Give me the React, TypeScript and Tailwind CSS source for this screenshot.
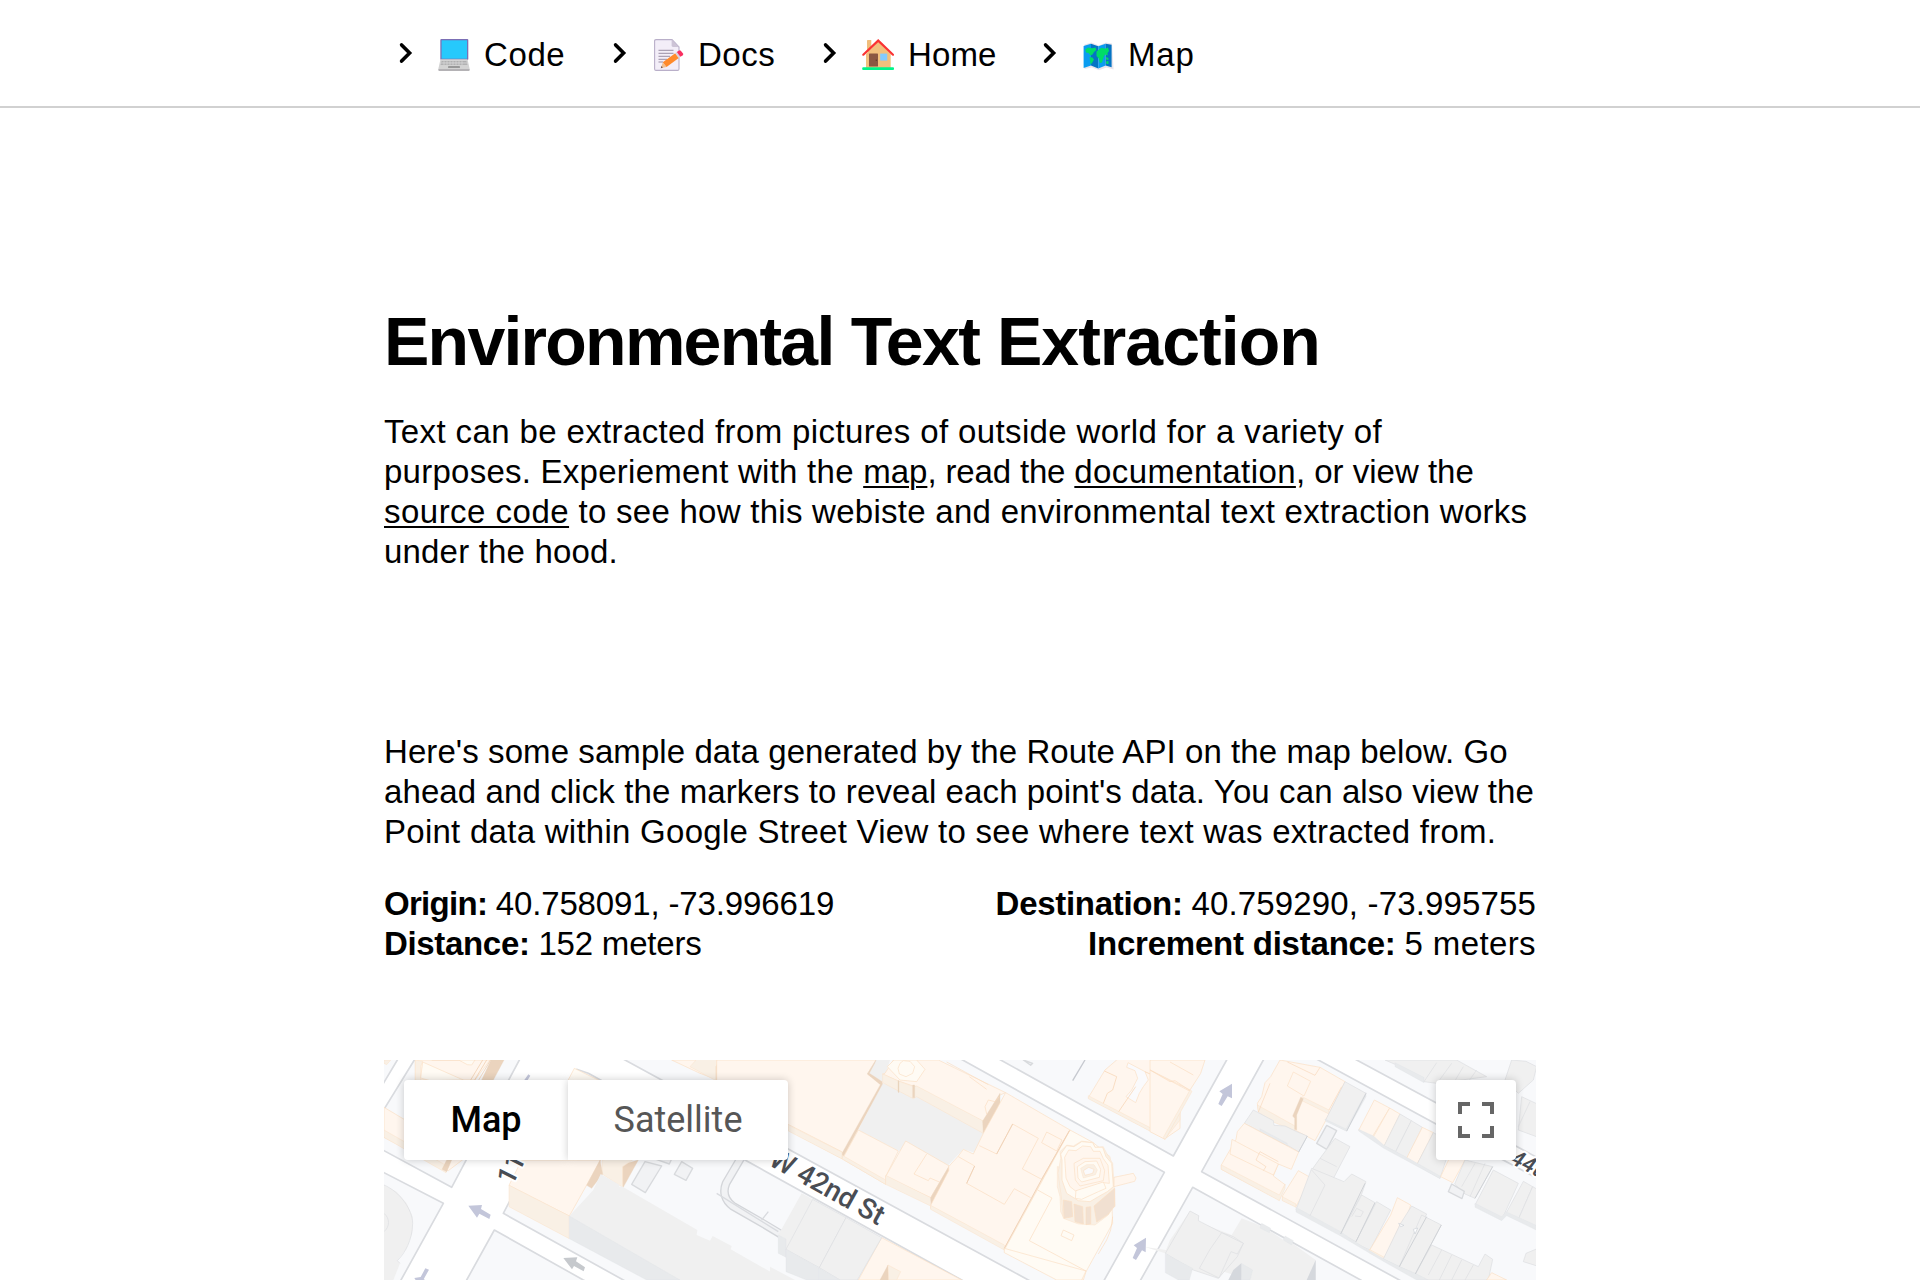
import type { ReactNode } from "react";

type Shape = [points: string, kind: keyof typeof KINDS];

const KINDS = {
  land: { fill: "#f8f9fb", stroke: "#d9dbdf", w: 5 },
  lot: { fill: "#f1f2f4", stroke: "#d8dadd", w: 4 },
  court: { fill: "#fafafc", stroke: "#fbdfc4", w: 2 },
  top: { fill: "#fff6ee", stroke: "#fbdfc4", w: 2 },
  pale: { fill: "#fffbf4", stroke: "#fbdfc4", w: 2 },
  side: { fill: "#f9f0e5", stroke: "#fbe3cb", w: 1.5 },
  dark: { fill: "#ebd4be", stroke: "#ebd4be", w: 1 },
  tan: { fill: "#f1e0d1", stroke: "#fbdfc4", w: 2 },
  gray: { fill: "#f0f0f0", stroke: "#dddee1", w: 2 },
  flat: { fill: "#f0f0f0", stroke: "none", w: 0 },
  wall: { fill: "#e8eaec", stroke: "#e2e4e7", w: 1 },
  shade: { fill: "#d5d8dd", stroke: "none", w: 0 },
};

function Shapes({ items }: { items: Shape[] }) {
  return (
    <>
      {items.map(([points, kind], i) => (
        <polygon key={i} points={points} fill={KINDS[kind].fill} stroke={KINDS[kind].stroke} strokeWidth={KINDS[kind].w} strokeLinejoin="round" />
      ))}
    </>
  );
}

const blocks: Shape[] = [
  ["-20,-20 80,-20 52,30 12,97 -20,150", "land"],
  ["133,-20 103,30 12,178 -20,230 -20,284 12,302 215,412 418,30 446,-20", "land"],
  ["-20,350 12,368 190,460 63,690 40,730 -20,730", "land"],
  ["343,540 260,690 240,730 690,730 610,690", "land"],
  ["590,58 625,70 1745,690 1820,730 800,730 730,690 370,490 400,432", "land"],
  ["640,-20 735,30 1945,690 2020,730 2150,730 2173,690 2353,367 1748,30 1650,-20", "land"],
  ["1770,-20 1862,30 2380,318 2540,30 2568,-20", "land"],
  ["2680,-20 2650,30 2465,365 3058,690 3130,730 3500,730 3500,400 3168,222 2815,30 2720,-20", "land"],
  ["2438,412 2282,690 2260,730 3010,730 2942,690", "land"],
  ["2840,-20 2930,30 3168,158 3500,338 3500,-20", "land"],
];

const west: Shape[] = [
  ["12,30 32,30 20,44 12,40", "side"],
  ["106,30 330,30 285,90 106,90", "top"],
  ["106,30 106,90 122,95 122,50 128,34", "side"],
  ["155,30 285,30 275,45 262,44 236,30", "pale"],
  ["128,36 250,90 150,92 122,84", "pale"],
  ["333,30 372,30 340,90 305,90", "dark"],
  ["12,172 260,320 205,362 12,262", "top"],
  ["12,240 205,350 198,368 12,262", "side"],
  ["215,330 200,365 186,358 200,330", "dark"],
  ["12,405 50,425 80,460 98,500 97,550 80,595 52,632 60,640 40,690 12,690", "flat"],
  ["583,55 562,95 560,120 700,120 655,90", "pale"],
  ["875,30 1008,88 1022,130 1300,200 1420,30", "flat"],
  ["875,30 1008,30 1008,88 960,70", "top"],
  ["950,28 1024,28 1008,50 1008,92 930,50", "side"],
  ["1008,50 1020,28 1045,28 1008,92", "dark"],
  ["755,403 795,335 845,348 796,428", "lot"],
  ["905,335 938,355 918,391 883,373", "lot"],
  ["820,325 868,342 878,320", "lot"],
  ["425,330 662,330 568,498 387,406", "top"],
  ["387,406 568,498 568,566 387,470", "side"],
  ["775,330 728,415 722,345", "dark"],
  ["666,330 775,318 728,350 728,412 666,372", "side"],
  ["660,330 668,372 635,415 620,406", "dark"],
  ["662,372 718,404 718,412 724,408 952,540 950,555 990,572 998,558 1055,588 1052,598 1215,690 840,690 568,498 640,420", "flat"],
  ["568,498 900,690 800,690 568,566", "wall"],
];

const central: Shape[] = [
  ["-160,30 318,30 292,72 337,100 217,325 215,305 -20,185 -160,100", "top"],
  ["-20,195 217,307 217,327 -20,200", "side"],
  ["55,225 217,307 217,327 55,243", "side"],
  ["318,30 360,30 340,95 292,72", "flat"],
  ["337,100 440,130 655,240 620,310 580,298 530,350 380,300 265,240", "flat"],
  ["292,72 318,30 314,40 298,70 337,95 337,103 217,325 217,308 331,104", "dark"],
  ["265,240 385,303 347,380 347,403 217,327", "top"],
  ["217,316 347,390 347,403 217,327", "side"],
  ["345,70 370,30 505,30 707,128 690,135 640,215 440,112 430,108 385,93 338,72", "top"],
  ["338,72 385,93 430,110 440,108 640,213 640,250 440,140 430,146 338,98", "side"],
  ["690,130 690,165 640,250 638,213", "dark"],
  ["352,50 372,30 440,30 465,58 440,95 390,90", "pale"],
  ["384,55 390,40 400,32 420,34 434,50 428,70 408,80 388,72", "pale"],
  ["384,92 387,92 387,128 384,126", "dark"],
  ["428,105 434,105 434,143 428,143", "dark"],
  ["407,273 538,348 482,443 347,380", "top"],
  ["347,376 482,443 482,468 347,403", "side"],
  ["536,350 538,362 484,466 482,443", "dark"],
  ["707,128 900,240 703,595 482,475 482,466 536,362 536,350 565,318 580,298 610,312 640,250", "top"],
  ["482,466 703,585 703,600 482,478", "side"],
  ["900,240 970,278 1020,320 1028,520 948,665 940,690 880,690 703,600", "pale"],
  ["703,595 948,663 935,690 860,690 703,608", "pale"],
  ["335,563 575,690 265,690", "top"],
  ["354,645 356,690 330,690", "dark"],
  ["354,645 392,665 380,690 356,690", "side"],
  ["95,430 128,448 48,598 48,620 25,610 25,555", "flat"],
  ["25,555 48,567 48,622 25,610", "wall"],
  ["128,448 228,503 148,653 48,598", "gray"],
  ["228,503 335,563 262,690 210,690 148,653", "gray"],
  ["48,598 148,655 148,690 110,690 48,665", "wall"],
  ["148,655 210,690 148,690", "wall"],
  ["0,650 75,690 0,690", "flat"],
  ["1040,30 1110,-5 1230,40 1230,235 1185,266 955,143 1005,60", "top"],
  ["955,137 1185,256 1230,185 1230,210 1185,267 955,146", "side"],
  ["1074,38 1125,65 1135,90 1120,110 1108,130 1097,158 1068,140 1085,120 1103,85 1095,62 1070,52", "court"],
  ["760,30 788,40 782,46", "lot"],
];

const tower: Shape[] = [
  ["862,350 876,352 872,385 878,420 880,502 872,485 870,440 862,410", "side"],
  ["870,305 890,285 910,288 935,273 970,278 975,292 1000,290 1010,310 1028,340 1032,400 1035,470 1020,475 1015,495 975,525 925,522 880,505 874,440 864,370 872,325", "side"],
  ["872,312 890,287 912,290 935,275 968,278 975,292 998,292 1008,320 1025,340 1030,410 1012,425 985,440 960,455 925,452 890,430 876,390 876,330", "pale"],
  ["884,322 896,300 918,302 938,288 962,290 970,304 990,304 1000,326 1014,346 1018,400 1000,398 918,424 900,410 888,384", "top"],
  ["1032,382 1090,370 1098,384 1094,394 1032,410", "top"],
  ["912,340 940,325 990,325 1004,362 1000,392 930,408 916,390", "top"],
  ["922,350 945,335 980,333 992,358 988,382 935,396 924,384", "pale"],
  ["932,355 950,344 972,344 982,360 976,374 940,384", "side"],
  ["940,362 956,352 972,358 968,370 945,376", "court"],
  ["918,422 1000,396 1008,415 985,425 935,448 916,445", "pale"],
  ["880,450 905,455 908,500 882,505", "tan"],
  ["912,462 938,470 940,522 915,515", "tan"],
  ["948,472 962,470 962,522 948,524", "tan"],
  ["972,468 1034,415 1034,468 1016,492 980,516", "tan"],
];

const east: Shape[] = [
  ["390,30 510,52 585,95 527,212 495,272 435,240 360,208 325,182 322,160 335,140 345,98 362,80", "top"],
  ["322,165 435,228 435,243 360,212 325,186", "side"],
  ["456,140 537,180 537,192 452,150", "side"],
  ["452,142 460,146 440,195 440,240 434,238 434,205 428,198", "dark"],
  ["585,95 648,130 590,243 527,210", "gray"],
  ["525,207 588,237 648,128 648,140 590,244 527,214", "wall"],
  ["430,66 482,94 462,138 412,108", "top"],
  ["310,180 370,212 372,226 405,228 440,245 472,258 446,306 420,290 330,245 283,220", "gray"],
  ["330,236 412,280 412,288 330,246", "wall"],
  ["283,220 446,306 424,358 385,342 370,378 405,404 388,450 214,358 214,345 258,268 262,245", "top"],
  ["214,345 388,435 405,402 405,415 388,452 214,358", "side"],
  ["246,268 385,342 370,375 240,312", "top"],
  ["530,226 560,242 530,298 500,280", "lot"],
  ["673,150 719,174 666,262 626,241", "top"],
  ["719,174 750,192 702,290 666,268", "top"],
  ["750,192 784,212 737,305 702,288", "gray"],
  ["784,212 817,232 770,328 737,305", "gray"],
  ["817,232 850,248 800,345 768,328", "top"],
  ["850,248 905,278 870,385 800,345", "gray"],
  ["626,238 670,258 702,286 770,322 870,378 870,386 700,294 626,243", "wall"],
  ["905,310 945,330 908,398 872,380", "top"],
  ["945,330 1028,350 975,445 945,432 914,402", "gray"],
  ["905,402 943,424 936,446 895,425", "lot"],
  ["1030,360 1105,400 1055,510 975,465", "gray"],
  ["1120,394 1148,410 1105,508 1068,490", "gray"],
  ["1148,410 1200,440 1200,550 1105,508", "gray"],
  ["975,460 1055,500 1068,485 1200,545 1200,560 1070,497 1055,512 975,472", "wall"],
  ["555,265 600,290 545,395 485,360 510,325", "gray"],
  ["445,362 484,384 438,470 397,450 398,437", "top"],
  ["397,440 438,462 438,472 397,452", "side"],
  ["485,355 582,395 605,372 648,395 635,432 572,552 438,480", "gray"],
  ["635,435 675,458 618,575 572,552", "gray"],
  ["680,455 722,480 660,600 615,580", "gray"],
  ["742,443 782,465 768,510 752,520 703,627 658,602 722,495", "top"],
  ["658,598 703,622 768,510 768,518 703,632 658,608", "side"],
  ["785,468 830,492 748,650 700,627 752,520", "gray"],
  ["815,495 874,525 796,672 748,650", "gray"],
  ["845,585 985,650 1005,612 1028,628 1015,690 820,690 796,672", "gray"],
  ["438,472 572,545 615,575 660,603 700,626 748,650 796,670 835,690 800,690 700,634 572,558 438,486", "wall"],
  ["1025,668 1070,690 1010,690", "top"],
  ["1128,610 1200,580 1200,660 1120,635", "gray"],
  ["-18,590 48,600 60,570 120,483 148,497 145,515 245,555 275,505 340,530 400,570 430,582 497,630 497,690 420,690 300,690 46,610", "flat"],
  ["46,610 120,483 146,497 145,512 215,548 250,560 280,580 262,620 205,685 130,660", "gray"],
  ["46,612 128,655 118,690 85,690 46,668", "wall"],
  ["215,548 280,580 262,612 243,605 207,684 148,655 180,598", "gray"],
  ["274,640 308,660 300,690 274,690", "wall"],
  ["274,640 274,690 235,690 250,660", "shade"],
  ["497,630 497,690 470,690", "shade"],
  ["335,520 362,535 358,548 330,534", "wall"],
  ["405,558 430,572 425,585 400,570", "wall"],
  ["705,30 740,45 822,95 860,100 1010,80 920,30", "gray"],
  ["735,38 822,82 822,98 735,50", "wall"],
  ["1085,30 1128,34 1160,50 1150,90 1105,130 1065,90", "gray"],
  ["1115,140 1200,180 1200,275 1105,240", "gray"],
  ["0,30 165,30 152,70 120,120 0,60", "top"],
  ["0,60 120,124 45,268 0,245", "top"],
  ["120,120 126,124 46,268 40,262", "side"],
];

function Lines({ d, color = "#dddee1", w = 2 }: { d: string; color?: string; w?: number }) {
  return <path d={d} fill="none" stroke={color} strokeWidth={w} strokeLinejoin="round" />;
}

function StreetMap() {
  return (
    <svg viewBox="12 30 3456 660" className="block h-[220px] w-[1152px]" preserveAspectRatio="none">
      <rect x="0" y="0" width="3500" height="720" fill="#ffffff" />
      <Shapes items={blocks} />
      <Shapes items={west} />
      <Lines d="M272,90 L308,30 M284,90 L320,30 M296,90 L332,30" color="#efc9a6" />
      <Lines d="M12,490 C30,505 30,530 12,545" />
      <Lines d="M12,405 C60,425 98,480 98,520 C97,570 75,610 52,632 L60,640" />
      <path d="M1082,325 L1038,400 C1028,425 1034,450 1058,468 L1140,515 L1215,560" fill="none" stroke="#d3d5d9" strokeWidth="26" />
      <path d="M1082,325 L1038,400 C1028,425 1034,450 1058,468 L1140,515 L1215,560" fill="none" stroke="#f1f2f4" strokeWidth="18" />
      <g transform="translate(1170 0)">
        <Shapes items={central} />
        <Lines d="M945,30 L908,92" color="#c6c9cf" w={4} />
        <Lines d="M628,287 L680,312 L728,222 L805,265 L757,357 L815,388 M815,388 L900,240 M830,246 L876,270 L860,303 L815,278 Z M565,320 L614,348 L590,400 L703,463 L733,416 L782,443 M470,312 L432,372 L475,392 L480,384 L508,396 M530,36 L655,104 M598,80 L650,118 M688,140 L675,155 L655,150 L645,170 L650,192" color="#fbdcbf" />
        <Lines d="M680,312 L728,222 M815,388 L898,242 M703,595 L815,388 M590,400 L614,348" color="#f0d3b9" w={3} />
        <Lines d="M803,420 L846,444 L778,572 L948,663 M880,540 L912,555 L905,572 L873,557 Z M1028,500 L1022,540 L1010,570 L985,612" color="#fbdcbf" />
        <Lines d="M1003,63 L1040,80 L1028,120 L1012,130 L1000,160 M1125,65 L1200,100 M1046,185 L1097,110" color="#f8d8bb" w={2.5} />
        <Lines d="M-5,485 L-25,510 M-160,430 L25,545" color="#d9dbdf" w={4} />
        <Shapes items={tower} />
      </g>
      <g transform="translate(2310 0)">
        <Shapes items={east} />
        <Lines d="M0,60 L60,95 L75,92 L120,122 M60,36 L130,75" color="#fbdcbf" />
        <Lines d="M510,52 L495,76 L412,36 M537,180 L575,110 M325,186 L360,100 M318,330 L330,305 L385,335 M318,330 L348,350 L340,362" color="#f8d8bb" />
        <Lines d="M510,325 L560,350 M485,360 L525,405 L480,497 M605,500 L620,475 L640,485 L632,500 L615,498 M875,600 L835,675 M905,615 L868,690 M935,630 L905,690 M970,645 L945,690 M860,38 L822,95 M905,40 L865,95 M940,50 L915,92 M980,60 L955,95 M1005,340 L960,440 M975,340 L935,410 M1140,155 L1105,230" />
        <Lines d="M748,650 L830,500 M796,672 L874,525 M590,243 L648,130 M446,306 L472,258 M975,445 L1028,350 M572,552 L645,400 M618,575 L675,458" color="#d0d3d7" w={3} />
        <path d="M790,538 L803,534 L795,552 Z M746,520 L762,526 L752,530 Z" fill="#fff" stroke="#ccd0d6" strokeWidth="2" />
      </g>

      <g fill="#c3c6da">
        <path d="M265,467 L306,465 L303,477 L332,494 L328,507 L298,491 L291,503 Z" />
        <path d="M103,684 L122,681 L136,655 L147,659 L131,688 L140,692 L108,692 Z" />
        <path d="M445,73 L433,90 L443,90 L451,77 Z" />
        <path d="M2298,563 L2261,586 L2271,594 L2258,624 L2268,630 L2286,601 L2297,607 Z" />
        <path d="M2556,101 L2518,124 L2528,132 L2515,162 L2525,168 L2543,139 L2556,145 Z" />
      </g>
      <path d="M550,624 L592,622 L588,634 L615,652 L611,664 L582,648 L576,658 Z" fill="#c6c9cd" />

      <g fontFamily="Roboto" fontWeight="500" fill="#494d54" stroke="#ffffff" strokeWidth="12" strokeLinejoin="round" paintOrder="stroke">
        <text transform="translate(1162 343) rotate(29)" fontSize="84" textLength="380">W 42nd St</text>
        <text transform="translate(397 409) rotate(-63)" fontSize="80">11th</text>
        <text transform="translate(3388 338) rotate(27)" fontSize="66" fontStyle="italic">44th</text>
      </g>
    </svg>
  );
}

function Chevron() {
  return (
    <svg viewBox="0 0 14 22" className="h-[22px] w-[14px] shrink-0" fill="none" stroke="#000" strokeWidth="3.6" strokeLinecap="round" strokeLinejoin="miter">
      <path d="M2.6 2.9 L10.6 11 L2.6 19.1" />
    </svg>
  );
}

function Laptop() {
  return (
    <svg viewBox="0 0 32 32" className="h-8 w-8">
      <rect x="2.3" y="0" width="28" height="21" rx="1" fill="#7b6fb5" />
      <rect x="3.6" y="1.3" width="25.4" height="18.4" fill="#26c9fc" />
      <path d="M2.5 20.3h27L31.7 30H.3z" fill="#d3d3d3" />
      <path d="M3.6 22h24.8l1 4H2.6z" fill="#a9a9ab" />
      <path d="M3.3 23.3h25.6M3 24.8h26.2M6 22v4M9 22v4M12 22v4M15 22v4M18 22v4M21 22v4M24 22v4" stroke="#dedede" strokeWidth=".6" />
      <rect x="10" y="27" width="12" height="2" rx=".4" fill="#989898" />
      <path d="M.3 30h31.4v1q0 1-1 1H1.3q-1 0-1-1z" fill="#b4b2b5" />
    </svg>
  );
}

function Memo() {
  return (
    <svg viewBox="0 0 32 32" className="h-8 w-8">
      <path d="M4 .6H20L27 8V30q0 1.4-1.4 1.4H4q-1.4 0-1.4-1.4V2Q2.600.6 4 .6Z" fill="#f3eef8" stroke="#b9afc9" strokeWidth="1.1" />
      <path d="M19.600.6V6.600q0 1.400 1.400 1.400H27Z" fill="#cdc4d6" />
      <path d="M6.500 11.300H21.500M6.500 14.300H21.500M6.500 17.300H18M6.500 20.300H15M6.500 23H11" stroke="#998ea4" strokeWidth="1" />
      <path d="M8.800 29.200L10.800 23.400L14.500 28Z" fill="#f3c08f" />
      <path d="M8.800 29.200L9.500 27L10.800 28.600Z" fill="#5f4a52" />
      <path d="M10.800 23.300L23.200 14.200L26.800 19L14.500 28.100Z" fill="#ff8a2b" />
      <path d="M23.200 14.200L24.800 13L28.400 17.800L26.800 19Z" fill="#d8d3de" />
      <path d="M24.800 13L26.700 11.700Q28 10.900 29 12L31 14.600Q31.700 15.700 30.600 16.400L28.400 17.800Z" fill="#f92f60" />
    </svg>
  );
}

function House() {
  return (
    <svg viewBox="0 0 32 32" className="h-8 w-8">
      <rect x="5" y="1" width="4.300" height="12" rx=".6" fill="#f0bd7c" />
      <path d="M16.200 2.500L28.700 15V29H4V15Z" fill="#f2c07d" />
      <rect x="7" y="14.600" width="9" height="13" rx=".6" fill="#8b5742" />
      <circle cx="14.300" cy="21.300" r=".7" fill="#5c3a2e" />
      <rect x="18.200" y="14.600" width="7" height="7" fill="#83cbff" />
      <path d="M1.300 15.700L16.200 1.600L31 15.700" fill="none" stroke="#fa3333" strokeWidth="2.200" strokeLinecap="round" />
      <rect x=".2" y="28.300" width="31.800" height="2.800" rx="1" fill="#00f58a" />
    </svg>
  );
}

function WorldMap() {
  return (
    <svg viewBox="0 0 32 32" className="h-8 w-8">
      <path d="M2.500 5.600L9.500 3.600L17 6.500L24 3.600L30 4.600L31.600 30.600L24.500 28.600L17 31.300L9.800 28.600L2.500 30Z" fill="#e9e5ec" />
      <path d="M1.600 7L9 4.700V26.600L1.600 29Z" fill="#0a9cf0" />
      <path d="M9 4.700L16.300 7.200V29.600L9 26.600Z" fill="#0574c4" />
      <path d="M16.300 7.200L23.600 4.700V26.600L16.300 29.600Z" fill="#0a9cf0" />
      <path d="M23.600 4.700L29.600 5.700V28.300L23.600 26.600Z" fill="#0574c4" />
      <path d="M3.300 10.500L6 8.500L10 9.200L13.500 8.600L14.300 11L12 13L10.500 15.500L8.500 16.500L6.500 14L4 13.500Z M7.600 18L10.500 18.500L12 20.500L10 24L8.700 25.500L8 22Z M14.500 12.500L17 10.500L19.500 8.800L23 9.800L26 8.600L27 12L25.500 14L25.700 16.500L23 15.500L21.500 18.500L20 23.500L17.800 24L16.800 19.500L14.500 17Z M24 18L26.500 19L26.500 21L24 20.500Z M24 22.500L26.500 22V25L24.500 25Z" fill="#00dc68" />
    </svg>
  );
}

function NavItem({ icon, label, className }: { icon: ReactNode; label: string; className: string }) {
  return (
    <a className={`flex h-full shrink-0 items-center ${className}`}>
      <Chevron />
      <span className="mt-1 ml-[25px] h-8 w-8">{icon}</span>
      <span className="mt-[3px] ml-[14px]">{label}</span>
    </a>
  );
}

export default function App() {
  return (
    <div className="h-[1280px] w-full overflow-hidden bg-white font-['Liberation_Sans',Arial,sans-serif] text-[33px] leading-[40px] text-black">
      <header className="h-[108px] border-b-2 border-[#d1d1d1]">
        <nav className="flex h-full pl-[399px]">
          <NavItem icon={<Laptop />} label="Code" className="w-[214px] tracking-[0.6px]" />
          <NavItem icon={<Memo />} label="Docs" className="w-[210px] tracking-[0.5px]" />
          <NavItem icon={<House />} label="Home" className="w-[220px] tracking-[0.1px]" />
          <NavItem icon={<WorldMap />} label="Map" className="w-[200px] tracking-[0.8px]" />
        </nav>
      </header>

      <main className="mx-auto w-[1152px] pt-[197px]">
        <h1 className="text-[68px] leading-[72px] font-bold whitespace-pre">
          <span className="tracking-[-1.75px]">{"Environmental "}</span>
          <span className="tracking-[-1.5px]">{"Text "}</span>
          <span className="tracking-[-0.95px]">Extraction</span>
        </h1>
        <p className="mt-[35px] whitespace-pre">
          <span className="block tracking-[0.374px]">Text can be extracted from pictures of outside world for a variety of</span>
          <span className="block">
            <span className="tracking-[0.25px]">{"purposes. Experiement with the "}</span>
            <a className="underline decoration-2 underline-offset-[3px]">map</a>
            <span className="tracking-[-0.15px]">{", read the "}</span>
            <a className="tracking-[0.39px] underline decoration-2 underline-offset-[3px]">documentation</a>
            <span>, or view the</span>
          </span>
          <span className="block">
            <a className="tracking-[0.48px] underline decoration-2 underline-offset-[3px]">source code</a>
            <span className="tracking-[0.27px]">{" to see how this webiste and environmental text extraction works"}</span>
          </span>
          <span className="block tracking-[0.18px]">under the hood.</span>
        </p>

        <p className="mt-40 whitespace-pre">
          <span className="block tracking-[0.08px]">Here's some sample data generated by the Route API on the map below. Go</span>
          <span className="block tracking-[0.105px]">ahead and click the markers to reveal each point's data. You can also view the</span>
          <span className="block tracking-[0.265px]">Point data within Google Street View to see where text was extracted from.</span>
        </p>

        <div className="mt-8 flex justify-between whitespace-pre">
          <div>
            <div>
              <b className="tracking-[-0.7px]">{"Origin: "}</b>
              <span className="tracking-[-0.14px]">40.758091, -73.996619</span>
            </div>
            <div>
              <b className="tracking-[-0.33px]">{"Distance: "}</b>
              <span className="tracking-[-0.2px]">152 meters</span>
            </div>
          </div>
          <div className="text-right">
            <div>
              <b className="tracking-[-0.3px]">{"Destination: "}</b>
              <span className="tracking-[0.15px]">40.759290, -73.995755</span>
            </div>
            <div>
              <b className="tracking-[-0.22px]">{"Increment distance: "}</b>
              <span className="tracking-[0.38px]">5 meters</span>
            </div>
          </div>
        </div>

        <section className="relative mt-24 h-[220px] overflow-hidden">
          <StreetMap />
          <div className="absolute inset-x-5 top-5 flex justify-between font-[Roboto,sans-serif] text-[36px]">
            <div className="flex h-20">
              <button className="flex w-[164px] items-center justify-center rounded-l bg-white font-medium text-black shadow-[0_0_8px_rgba(0,0,0,0.2)]">Map</button>
              <button className="flex w-[220px] items-center justify-center rounded-r bg-white text-[#565656] shadow-[0_0_8px_rgba(0,0,0,0.2)]">Satellite</button>
            </div>
            <button className="flex h-20 w-20 items-center justify-center rounded bg-white shadow-[0_0_8px_rgba(0,0,0,0.2)]">
              <svg viewBox="0 0 18 18" className="h-9 w-9" fill="#666666">
                <path d="M0 0v6h2V2h4V0H0zM16 0h-4v2h4v4h2V0h-2zM16 16h-4v2h6v-6h-2v4zM2 12H0v6h6v-2H2v-4z" />
              </svg>
            </button>
          </div>
        </section>
      </main>
    </div>
  );
}
